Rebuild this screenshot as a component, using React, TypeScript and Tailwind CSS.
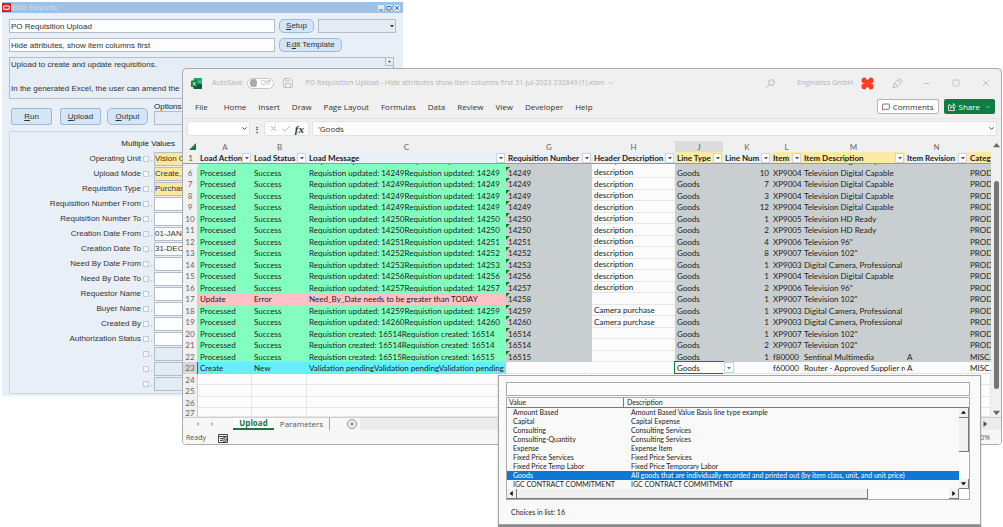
import React from "react"
import clsx from "clsx"
import { ChevronDown, MessageSquare, Save, X, Check, Minus, Square } from "lucide-react"

const params = [
    { label: "Operating Unit", value: "Vision Operations", required: true },
    { label: "Upload Mode", value: "Create, Update", required: true },
    { label: "Requisition Type", value: "Purchase", required: true },
    { label: "Requisition Number From", value: "" },
    { label: "Requisition Number To", value: "" },
    { label: "Creation Date From", value: "01-JAN-2023" },
    { label: "Creation Date To", value: "31-DEC-2023" },
    { label: "Need By Date From", value: "" },
    { label: "Need By Date To", value: "" },
    { label: "Requestor Name", value: "" },
    { label: "Buyer Name", value: "" },
    { label: "Created By", value: "" },
    { label: "Authorization Status", value: "" },
    { label: "", value: "", disabled: true },
    { label: "", value: "", disabled: true },
    { label: "", value: "", disabled: true },
]

const columns = [
    { letter: "A", title: "Load Action", width: "w-[54px]" },
    { letter: "B", title: "Load Status", width: "w-[55px]" },
    { letter: "C", title: "Load Message", width: "w-[199px]" },
    { letter: "G", title: "Requisition Number", width: "w-[86px]" },
    { letter: "H", title: "Header Description", width: "w-[83px]" },
    { letter: "J", title: "Line Type", width: "w-[48px]", required: true },
    { letter: "K", title: "Line Num", width: "w-[48px]" },
    { letter: "L", title: "Item", width: "w-[31px]", required: true },
    { letter: "M", title: "Item Description", width: "w-[103px]", required: true },
    { letter: "N", title: "Item Revision", width: "w-[63px]" },
    { letter: "", title: "Categ", width: "", required: true },
]

const updated = (n: string) => `Requistion updated: ${n}Requistion updated: ${n}`
const created = (n: string) => `Requistion created: ${n}Requistion created: ${n}`

// action, status, message, requisition, header, line type, line, item, description, revision, category
const rows = [
    ["Processed", "Success", updated("14249"), "14249", "description", "Goods", "10", "XP9004", "Television Digital Capable", "", "PROD"],
    ["Processed", "Success", updated("14249"), "14249", "description", "Goods", "7", "XP9004", "Television Digital Capable", "", "PROD"],
    ["Processed", "Success", updated("14249"), "14249", "description", "Goods", "3", "XP9004", "Television Digital Capable", "", "PROD"],
    ["Processed", "Success", updated("14249"), "14249", "description", "Goods", "12", "XP9004", "Television Digital Capable", "", "PROD"],
    ["Processed", "Success", updated("14250"), "14250", "description", "Goods", "1", "XP9005", "Television HD Ready", "", "PROD"],
    ["Processed", "Success", updated("14250"), "14250", "description", "Goods", "2", "XP9005", "Television HD Ready", "", "PROD"],
    ["Processed", "Success", updated("14251"), "14251", "description", "Goods", "4", "XP9006", "Television 96\"", "", "PROD"],
    ["Processed", "Success", updated("14252"), "14252", "description", "Goods", "8", "XP9007", "Television 102\"", "", "PROD"],
    ["Processed", "Success", updated("14253"), "14253", "description", "Goods", "1", "XP9003", "Digital Camera, Professional", "", "PROD"],
    ["Processed", "Success", updated("14256"), "14256", "description", "Goods", "1", "XP9004", "Television Digital Capable", "", "PROD"],
    ["Processed", "Success", updated("14257"), "14257", "description", "Goods", "2", "XP9006", "Television 96\"", "", "PROD"],
    ["Update", "Error", "Need_By_Date needs to be greater than TODAY", "14258", "", "Goods", "1", "XP9007", "Television 102\"", "", "PROD"],
    ["Processed", "Success", updated("14259"), "14259", "Camera purchase", "Goods", "1", "XP9003", "Digital Camera, Professional", "", "PROD"],
    ["Processed", "Success", updated("14260"), "14260", "Camera purchase", "Goods", "1", "XP9003", "Digital Camera, Professional", "", "PROD"],
    ["Processed", "Success", created("16514"), "16514", "", "Goods", "1", "XP9007", "Television 102\"", "", "PROD"],
    ["Processed", "Success", created("16514"), "16514", "", "Goods", "2", "XP9007", "Television 102\"", "", "PROD"],
    ["Processed", "Success", created("16515"), "16515", "", "Goods", "1", "f80000", "Sentinal Multimedia", "A", "MISC."],
    ["Create", "New", "Validation pendingValidation pendingValidation pending", "", "", "Goods", "", "f60000", "Router - Approved Supplier re", "A", "MISC."],
]

const choices = [
    ["Amount Based", "Amount Based Value Basis line type example"],
    ["Capital", "Capital Expense"],
    ["Consulting", "Consulting Services"],
    ["Consulting-Quantity", "Consulting Services"],
    ["Expense", "Expense Item"],
    ["Fixed Price Services", "Fixed Price Services"],
    ["Fixed Price Temp Labor", "Fixed Price Temporary Labor"],
    ["Goods", "All goods that are individually recorded and printed out (by item class, unit, and unit price)"],
    ["IGC CONTRACT COMMITMENT", "IGC CONTRACT COMMITMENT"],
]

const menu = ["Home", "Insert", "Draw", "Page Layout", "Formulas", "Data", "Review", "View", "Developer", "Help"]

function Triangle({ dir, className }: { dir: "up" | "down" | "left" | "right", className?: string }) {
    const points = {
        up: "0,6 4,1 8,6",
        down: "0,2 4,7 8,2",
        left: "6,0 1,4 6,8",
        right: "2,0 7,4 2,8",
    }
    return (
        <svg viewBox="0 0 8 8" className={clsx("shrink-0 fill-current", className)}>
            <polygon points={points[dir]} />
        </svg>
    )
}

function FormButton({ hotkey, before = "", after, className }: { hotkey: string, before?: string, after: string, className: string }) {
    return (
        <button className={clsx("border border-[#9fb9d3] bg-[#d3e5f6] text-[#333] text-center", className)}>
            {before}<span className="underline">{hotkey}</span>{after}
        </button>
    )
}

function BlitzWindow() {
    return (
        <section className="absolute left-[2px] top-[2px] w-2/5 bg-[#e8eff7] text-[8px] leading-[12px] text-[#333] font-['Liberation_Sans',Arial,sans-serif]">
            <header className="flex items-center h-[11px] bg-[#9fc1e4] text-[#c9def2] pr-[3px]">
                <svg viewBox="0 0 9 9" className="w-[9px] h-[9px] mr-[1px]">
                    <rect width="9" height="9" fill="#d8232a" />
                    <rect x="1.5" y="3" width="6" height="3.4" rx="1.6" fill="none" stroke="#fff" strokeWidth="1.1" />
                </svg>
                <h1>Blitz Reports</h1>
                <div className="ml-auto flex gap-[2px]">
                    {["M1 5h4", "M1 1.500h4v3.500h-4z", "M1 1l4 4M5 1l-4 4"].map((d, i) => (
                        <button key={d} aria-label={["Minimize", "Maximize", "Close"][i]} className="w-[6px] h-[6px] bg-[#dbe9f7]">
                            <svg viewBox="0 0 6 6" className="w-[6px] h-[6px]" fill="none" stroke="#3f6fa5"><path d={d} /></svg>
                        </button>
                    ))}
                </div>
            </header>
            <div className="px-[7px] pt-[6px] pb-[2px]">
                <div className="flex gap-[4px] items-center">
                    <input aria-label="Report" defaultValue="PO Requisition Upload" className="w-[266px] h-[14px] px-[1px] border border-[#b4bcc6] bg-[#fcfdfe]" />
                    <FormButton hotkey="S" after="etup" className="w-[35px] h-[14px] rounded-[5px]" />
                    <div className="relative flex-1 h-[14px]">
                        <select aria-label="Options list" className="appearance-none w-full h-full border border-[#b4bcc6] bg-[#e3ebf4]" />
                        <Triangle dir="down" className="absolute right-[2px] top-[5px] w-[4px] h-[4px]" />
                    </div>
                </div>
                <div className="flex gap-[4px] items-center mt-[5px]">
                    <input aria-label="Template" defaultValue="Hide attributes, show item columns first" className="w-[266px] h-[14px] px-[1px] border border-[#b4bcc6] bg-[#fcfdfe]" />
                    <FormButton before="E" hotkey="d" after="it Template" className="w-[63px] h-[14px] rounded-[5px]" />
                </div>
                <div className="relative mt-[5px] mr-[2px]">
                    <textarea
                        aria-label="Description"
                        readOnly
                        className="block w-full h-[42px] pt-[1px] px-[1px] resize-none overflow-hidden border border-[#b4bcc6] bg-[#e6edf5]"
                        value={"Upload to create and update requisitions.\n\nIn the generated Excel, the user can amend the\n        Header Description"}
                    />
                    <Triangle dir="up" className="absolute right-0 top-0 w-[9px] h-[9px] p-[2px] border border-[#b4bcc6]" />
                </div>
                <div className="flex items-start pl-[2px] mt-[3px]">
                    <FormButton hotkey="R" after="un" className="mt-[6px] w-[41px] h-[17px] rounded-[2px]" />
                    <FormButton hotkey="U" after="pload" className="mt-[6px] ml-[8px] w-[41px] h-[17px] rounded-[2px]" />
                    <FormButton hotkey="O" after="utput" className="mt-[6px] ml-[6px] w-[41px] h-[17px] rounded-[5px]" />
                    <label className="ml-[6px] leading-[9px] text-[#222]">
                        Options
                        <input className="block w-[200px] h-[14px] border border-[#b4bcc6] bg-[#e3ebf4]" />
                    </label>
                </div>
                <div className="mt-[6px] pt-[6px] pb-[2px] border border-[#cdd6e0] rounded-[2px]">
                    <div className="w-[165px] text-right text-[#222]">Multiple Values</div>
                    <div className="pt-[1px]">
                        {params.map((p, i) => (
                            <div key={i} className="flex items-center h-[15px]">
                                <label htmlFor={`param-${i}`} className="w-[131px] text-right">{p.label}</label>
                                <input type="checkbox" aria-label={`Multiple ${p.label}`} className="appearance-none ml-[2px] w-[6px] h-[6px] border border-[#c3cbd4] bg-[#f3f6fa]" />
                                <span className="w-[5px] text-center text-[#9aa5b1]">,</span>
                                <input
                                    id={`param-${i}`}
                                    defaultValue={p.value}
                                    className={clsx(
                                        "w-[200px] h-[14px] border border-[#b4bcc6]",
                                        p.required ? "bg-[#fde99d]" : p.disabled ? "bg-[#e3ebf4]" : "bg-[#fcfdfe]"
                                    )}
                                />
                            </div>
                        ))}
                    </div>
                </div>
            </div>
        </section>
    )
}

function TitleBar() {
    return (
        <header className="flex items-center h-[28px] pl-[8px] pr-[10px] text-[7px] text-[#b4b4b4]">
            <svg viewBox="0 0 22 22" className="w-[11px] h-[11px]">
                <rect x="5" y="0" width="17" height="22" rx="2" fill="#21a366" />
                <rect x="5" y="11" width="17" height="11" rx="2" fill="#185c37" />
                <rect x="13" y="5" width="9" height="6" fill="#33c481" />
                <rect x="0" y="5" width="13" height="13" rx="1.5" fill="#107c41" />
                <path d="M3.5 8 L9.5 15 M9.5 8 L3.5 15" stroke="#fff" strokeWidth="1.8" />
            </svg>
            <span className="ml-[10px]">AutoSave</span>
            <button className="flex items-center gap-[3px] ml-[4px] w-[27px] h-[11px] px-[2px] rounded-full border border-[#c4c4c4] bg-white">
                <span className="w-[8px] h-[8px] rounded-full bg-[#a9a9a9]" />Off
            </button>
            <Save className="ml-[8px] w-[12px] h-[12px]" strokeWidth={1.5} />
            <span className="ml-[12px] whitespace-nowrap">PO Requisition Upload - Hide attributes show item columns first 31-Jul-2023 232849 (1).xlsm</span>
            <ChevronDown className="ml-[2px] w-[8px] h-[8px]" />
            <div className="ml-auto flex items-center">
                <svg viewBox="0 0 9 9" className="w-[9px] h-[9px]" fill="none" stroke="currentColor">
                    <circle cx="5.500" cy="3.500" r="2.800" />
                    <path d="M3.500 5.500L.5 8.500" />
                </svg>
                <span className="ml-[22px] whitespace-nowrap">Enginatics GmbH</span>
                <svg viewBox="0 0 26 26" className="ml-[8px] w-[13px] h-[13px]" fill="#f4411f">
                    <circle cx="7" cy="7" r="6" />
                    <circle cx="19" cy="7" r="6" />
                    <circle cx="7" cy="19" r="6" />
                    <circle cx="19" cy="19" r="6" />
                    <rect x="7" y="5" width="12" height="16" />
                    <circle cx="13" cy="2" r="3.500" fill="#f0f0f0" />
                    <circle cx="13" cy="24" r="3.500" fill="#f0f0f0" />
                </svg>
                <svg viewBox="0 0 22 22" className="ml-[18px] w-[11px] h-[11px]" fill="none" stroke="currentColor" strokeWidth="1.6">
                    <path d="M2 20L5 10L15 1L20 6L11 17L2 20zM5 10L11 17M12 4L17 9" />
                </svg>
                <button aria-label="Minimize" className="ml-[19px]"><Minus className="w-[9px] h-[9px]" strokeWidth={2} /></button>
                <button aria-label="Maximize" className="ml-[21px]"><Square className="w-[8px] h-[8px]" strokeWidth={2} /></button>
                <button aria-label="Close" className="ml-[21px]"><X className="w-[10px] h-[10px]" strokeWidth={2} /></button>
            </div>
        </header>
    )
}

function MenuBar() {
    return (
        <nav className="flex items-center h-[22px] pl-[12px] pr-[6px] pb-[2px] text-[8px] text-[#333] border-b border-[#e4e4e4]">
            <button className="mr-[16px]">File</button>
            <div className="flex gap-[12px]">
                {menu.map((item) => <button key={item}>{item}</button>)}
            </div>
            <button className="ml-auto flex items-center gap-[3px] h-[15px] px-[4px] rounded-[2px] border border-[#b5b5b5] bg-white">
                <MessageSquare className="w-[8px] h-[8px]" />Comments
            </button>
            <button className="flex items-center gap-[3px] ml-[5px] h-[15px] px-[4px] rounded-[2px] bg-[#107c41] text-white">
                <svg viewBox="0 0 16 16" className="w-[8px] h-[8px]" fill="none" stroke="currentColor" strokeWidth="1.6">
                    <path d="M6 4H1v11h12v-4M5 11c0-4 2-6 6-6V1l4 5.500-4 4.500V8c-3 0-4 1-6 3z" />
                </svg>
                Share<ChevronDown className="ml-[2px] w-[6px] h-[6px]" />
            </button>
        </nav>
    )
}

function FormulaBar() {
    return (
        <div className="flex items-center h-[22px] pl-[4px] pr-[4px] pb-[3px] text-[8px] text-[#333]">
            <div className="relative w-[63px] h-[15px]">
                <input aria-label="Name box" className="w-full h-full rounded-[2px] border border-[#e2e2e2] bg-white" />
                <ChevronDown className="absolute right-[2px] top-[4px] w-[7px] h-[7px]" strokeWidth={3} />
            </div>
            <span className="w-[14px] text-center font-bold">⋮</span>
            <div className="flex items-center justify-between w-[45px] h-[15px] px-[4px] rounded-[2px] border border-[#e2e2e2] bg-white">
                <X className="w-[9px] h-[9px] text-[#a8a8a8]" />
                <Check className="w-[10px] h-[10px] text-[#a8a8a8]" />
                <span className="text-[11px] leading-[12px] italic font-bold font-['Liberation_Serif',serif]">fx</span>
            </div>
            <div className="relative flex-1 h-[15px] ml-[3px]">
                <input aria-label="Formula" defaultValue="'Goods" className="w-full h-full px-[5px] rounded-[2px] border border-[#e2e2e2] bg-[#fcfcfc]" />
                <ChevronDown className="absolute right-[2px] top-[4px] w-[7px] h-[7px]" strokeWidth={3} />
            </div>
        </div>
    )
}

function cellColor(action: string, col: number) {
    if (col < 3) {
        if (action === "Update") return "bg-[#ffc1c5]"
        if (action === "Create") return "bg-[#66eeff]"
        return "bg-[#82ffbf]"
    }
    if (action === "Create" || col === 4) return "bg-[#fcfcfc] border-b border-[#e6e6e6]"
    return "bg-[#c9cfd0]"
}

function Sheet() {
    return (
        <table className="table-fixed w-full border-separate border-spacing-0 text-[8px] leading-[10px] text-[#222] font-['Lato',sans-serif]">
            <colgroup>
                <col className="w-[15px]" />
                {columns.map((c) => <col key={c.title} className={c.width} />)}
            </colgroup>
            <thead>
                <tr className="h-[11px] text-[#666]">
                    <th className="p-0"><svg viewBox="0 0 8 8" className="ml-auto mr-[2px] w-[7px] h-[7px]"><polygon points="8,0 8,8 0,8" fill="#107c41" /></svg></th>
                    {columns.map((c) => (
                        <th key={c.title} className={clsx("p-0 font-normal", c.letter === "J" && "bg-[#dcdcdc] text-[#217346]")}>{c.letter}</th>
                    ))}
                </tr>
                <tr className="h-[12px]">
                    <th className="p-0 font-normal text-[#555] border-b border-[#9a9a9a]">1</th>
                    {columns.map((c) => (
                        <th key={c.title} className={clsx("p-0 overflow-hidden border-b border-[#9a9a9a]", c.required ? "bg-[#fdeaa4]" : "bg-[#eaf0f8]")}>
                            <div className="flex items-center justify-between pl-[2px] whitespace-nowrap">
                                {c.title}
                                {c.letter && (
                                    <button aria-label={`Filter ${c.title}`} className="flex items-center justify-center w-[9px] h-[10px] mr-[1px] shrink-0 border border-[#cfd4da] bg-white text-[#555]">
                                        <Triangle dir="down" className="w-[4px] h-[4px]" />
                                    </button>
                                )}
                            </div>
                        </th>
                    ))}
                </tr>
            </thead>
            <tbody>
                {/* row scrolled under the frozen header */}
                <tr>
                    <td className="p-0" />
                    {rows[0].map((text, col) => (
                        <td key={col} className={clsx("p-0", col < 3 ? "bg-[#82ffbf]" : col === 4 ? "bg-[#fcfcfc]" : "bg-[#c9cfd0]")}>
                            <div className="flex items-end h-[3px] pl-[2px] leading-[12px] overflow-hidden whitespace-nowrap">{[2, 4, 8].includes(col) && text}</div>
                        </td>
                    ))}
                </tr>
                {rows.map((row, i) => {
                    const active = row[0] === "Create"
                    return (
                        <tr key={i} className="h-[11px] odd:h-[12px]">
                            <th className={clsx("p-0 font-normal text-[#666] border-r", active ? "bg-[#d6d6d6] border-[#107c41]" : "border-[#d0d0d0]")}>{i + 6}</th>
                            {row.map((text, col) => (
                                <td
                                    key={col}
                                    className={clsx(
                                        "relative p-0 whitespace-nowrap",
                                        active && col === 5 ? "" : "overflow-hidden",
                                        col === 6 ? "text-right pr-[2px]" : "pl-[2px]",
                                        cellColor(row[0], col)
                                    )}
                                >
                                    {col === 3 && text && (
                                        <svg viewBox="0 0 4 4" className="absolute left-0 top-0 w-[4px] h-[4px]"><polygon points="0,0 4,0 0,4" fill="#107c10" /></svg>
                                    )}
                                    {text}
                                    {active && col === 5 && (
                                        <>
                                            <span className="absolute -inset-px border border-[#107c41]" />
                                            <button aria-label="Open list" className="absolute left-full top-0 z-10 ml-[1px] flex items-center justify-center w-[10px] h-[11px] border border-[#cfd4da] bg-white text-[#777]">
                                                <Triangle dir="down" className="w-[4px] h-[4px]" />
                                            </button>
                                        </>
                                    )}
                                </td>
                            ))}
                        </tr>
                    )
                })}
                {[24, 25, 26, 27].map((n) => (
                    <tr key={n} className={n === 27 ? "" : "h-[11px] odd:h-[12px]"}>
                        <th className="p-0 font-normal text-[#666] border-r border-[#d0d0d0]">
                            <div className={n === 27 ? "h-[9px] overflow-hidden" : ""}>{n}</div>
                        </th>
                        {columns.map((c) => <td key={c.title} className="p-0 bg-[#fcfcfc] border-b border-r border-[#e6e6e6]" />)}
                    </tr>
                ))}
            </tbody>
        </table>
    )
}

function ExcelWindow() {
    return (
        <section className="absolute left-[182px] right-[1px] top-[68px] rounded-[4px] border border-[#a9adb3] bg-[#f0f0f0] overflow-hidden font-['Open_Sans',sans-serif]">
            <TitleBar />
            <MenuBar />
            <FormulaBar />
            <div className="flex">
                <div className="flex-1 min-w-0">
                    <Sheet />
                </div>
                <div className="flex flex-col items-center w-[10px] pt-[1px] pb-[1px] text-[#666]">
                    <Triangle dir="up" className="w-[7px] h-[7px]" />
                    <div className="mt-[32px] mb-[20px] w-[5px] flex-1 rounded-full bg-[#757575]" />
                    <Triangle dir="down" className="w-[7px] h-[7px]" />
                </div>
            </div>
            <footer className="text-[8px] text-[#555] bg-[#f7f7f7]">
                <div className="flex items-center h-[13px] border-t border-[#cfcfcf]">
                    <div className="flex gap-[10px] w-[50px] pl-[13px] text-[#aaa]">
                        <Triangle dir="left" className="w-[4px] h-[4px]" />
                        <Triangle dir="right" className="w-[4px] h-[4px]" />
                    </div>
                    <button className="w-[41px] h-[12px] leading-[10px] font-bold text-[#217346] bg-white border-b-2 border-[#217346]">Upload</button>
                    <button className="w-[56px] h-[12px] leading-[10px] border-r border-[#aaa]">Parameters</button>
                    <svg viewBox="0 0 20 20" className="ml-[17px] w-[10px] h-[10px]" fill="none" stroke="#777" strokeWidth="1.6">
                        <circle cx="10" cy="10" r="9" />
                        <path d="M10 5v10M5 10h10" />
                    </svg>
                    <div className="flex flex-1 items-center justify-end h-full ml-[3px] pr-[13px] bg-[#ececec]">
                        <Triangle dir="right" className="w-[6px] h-[6px]" />
                    </div>
                </div>
                <div className="flex items-center h-[14px] pl-[3px] pr-[11px] pt-[2px] text-[7px]">
                    Ready
                    <svg viewBox="0 0 20 18" className="ml-[12px] w-[10px] h-[9px]" fill="none" stroke="#444" strokeWidth="2">
                        <path d="M1 1h18v16H1zM1 5h18M4 9h5M4 13h4" />
                        <circle cx="13" cy="11" r="4" />
                        <circle cx="13" cy="11" r="1" />
                    </svg>
                    <span className="ml-auto">100%</span>
                </div>
            </footer>
        </section>
    )
}

function ChoicesDialog() {
    return (
        <section className="absolute left-[498px] right-[22px] top-[375px] px-[7px] pt-[6px] pb-[7px] border border-[#a6a6a6] bg-[#f9f9f9] shadow-[0_2px_1px_#8a8a8a] text-[7px] leading-[9px] text-[#222] font-['Lato',sans-serif]">
            <div className="pr-[3px]">
                <input aria-label="Find" className="block w-full h-[14px] border border-[#aaa] bg-[#fcfcfc]" />
                <div className="mt-[1px] border border-[#aaa]">
                    <div className="flex">
                        <div className="flex-1 min-w-0">
                            <table className="table-fixed w-full border-separate border-spacing-0 text-left">
                                <colgroup>
                                    <col className="w-[117px]" />
                                    <col />
                                </colgroup>
                                <thead>
                                    <tr className="h-[10px]">
                                        <th className="p-0 pl-[2px] font-normal border-b border-r border-[#777]">Value</th>
                                        <th className="p-0 pl-[3px] font-normal border-b border-[#777]">Description</th>
                                    </tr>
                                </thead>
                                <tbody>
                                    {choices.map(([value, description]) => (
                                        <tr key={value} className={clsx("h-[9px]", value === "Goods" && "bg-[#0d78d4] text-white")}>
                                            <td className="p-0 pl-[6px] whitespace-nowrap">{value}</td>
                                            <td className="p-0 pl-[7px] whitespace-nowrap">{description}</td>
                                        </tr>
                                    ))}
                                </tbody>
                            </table>
                        </div>
                        <div className="flex flex-col w-[10px] border-t border-[#777] mt-[9px] text-black bg-[#fcfcfc]">
                            <Triangle dir="up" className="w-[10px] h-[10px] p-[2px] bg-[#f0f0f0] border-r border-b border-[#777]" />
                            <div className="h-[34px] bg-[#f0f0f0] border-r border-b border-[#777]" />
                            <Triangle dir="down" className="mt-auto w-[10px] h-[10px] p-[2px] bg-[#f0f0f0] border-r border-b border-[#777]" />
                        </div>
                    </div>
                    <div className="flex h-[10px] pr-[10px] text-black bg-[#fcfcfc]">
                        <Triangle dir="left" className="w-[10px] h-[10px] p-[2px] bg-[#f0f0f0] border-r border-b border-[#777]" />
                        <div className="w-[351px] bg-[#f0f0f0] border-r border-b border-[#777]" />
                        <Triangle dir="right" className="ml-auto w-[10px] h-[10px] p-[2px] bg-[#f0f0f0] border-r border-b border-[#777]" />
                    </div>
                </div>
            </div>
            <p className="mt-[8px] pl-[5px]">Choices in list: 16</p>
        </section>
    )
}

export default function App() {
    return (
        <main className="relative min-h-screen overflow-hidden bg-white">
            <BlitzWindow />
            <ExcelWindow />
            <ChoicesDialog />
        </main>
    )
}
